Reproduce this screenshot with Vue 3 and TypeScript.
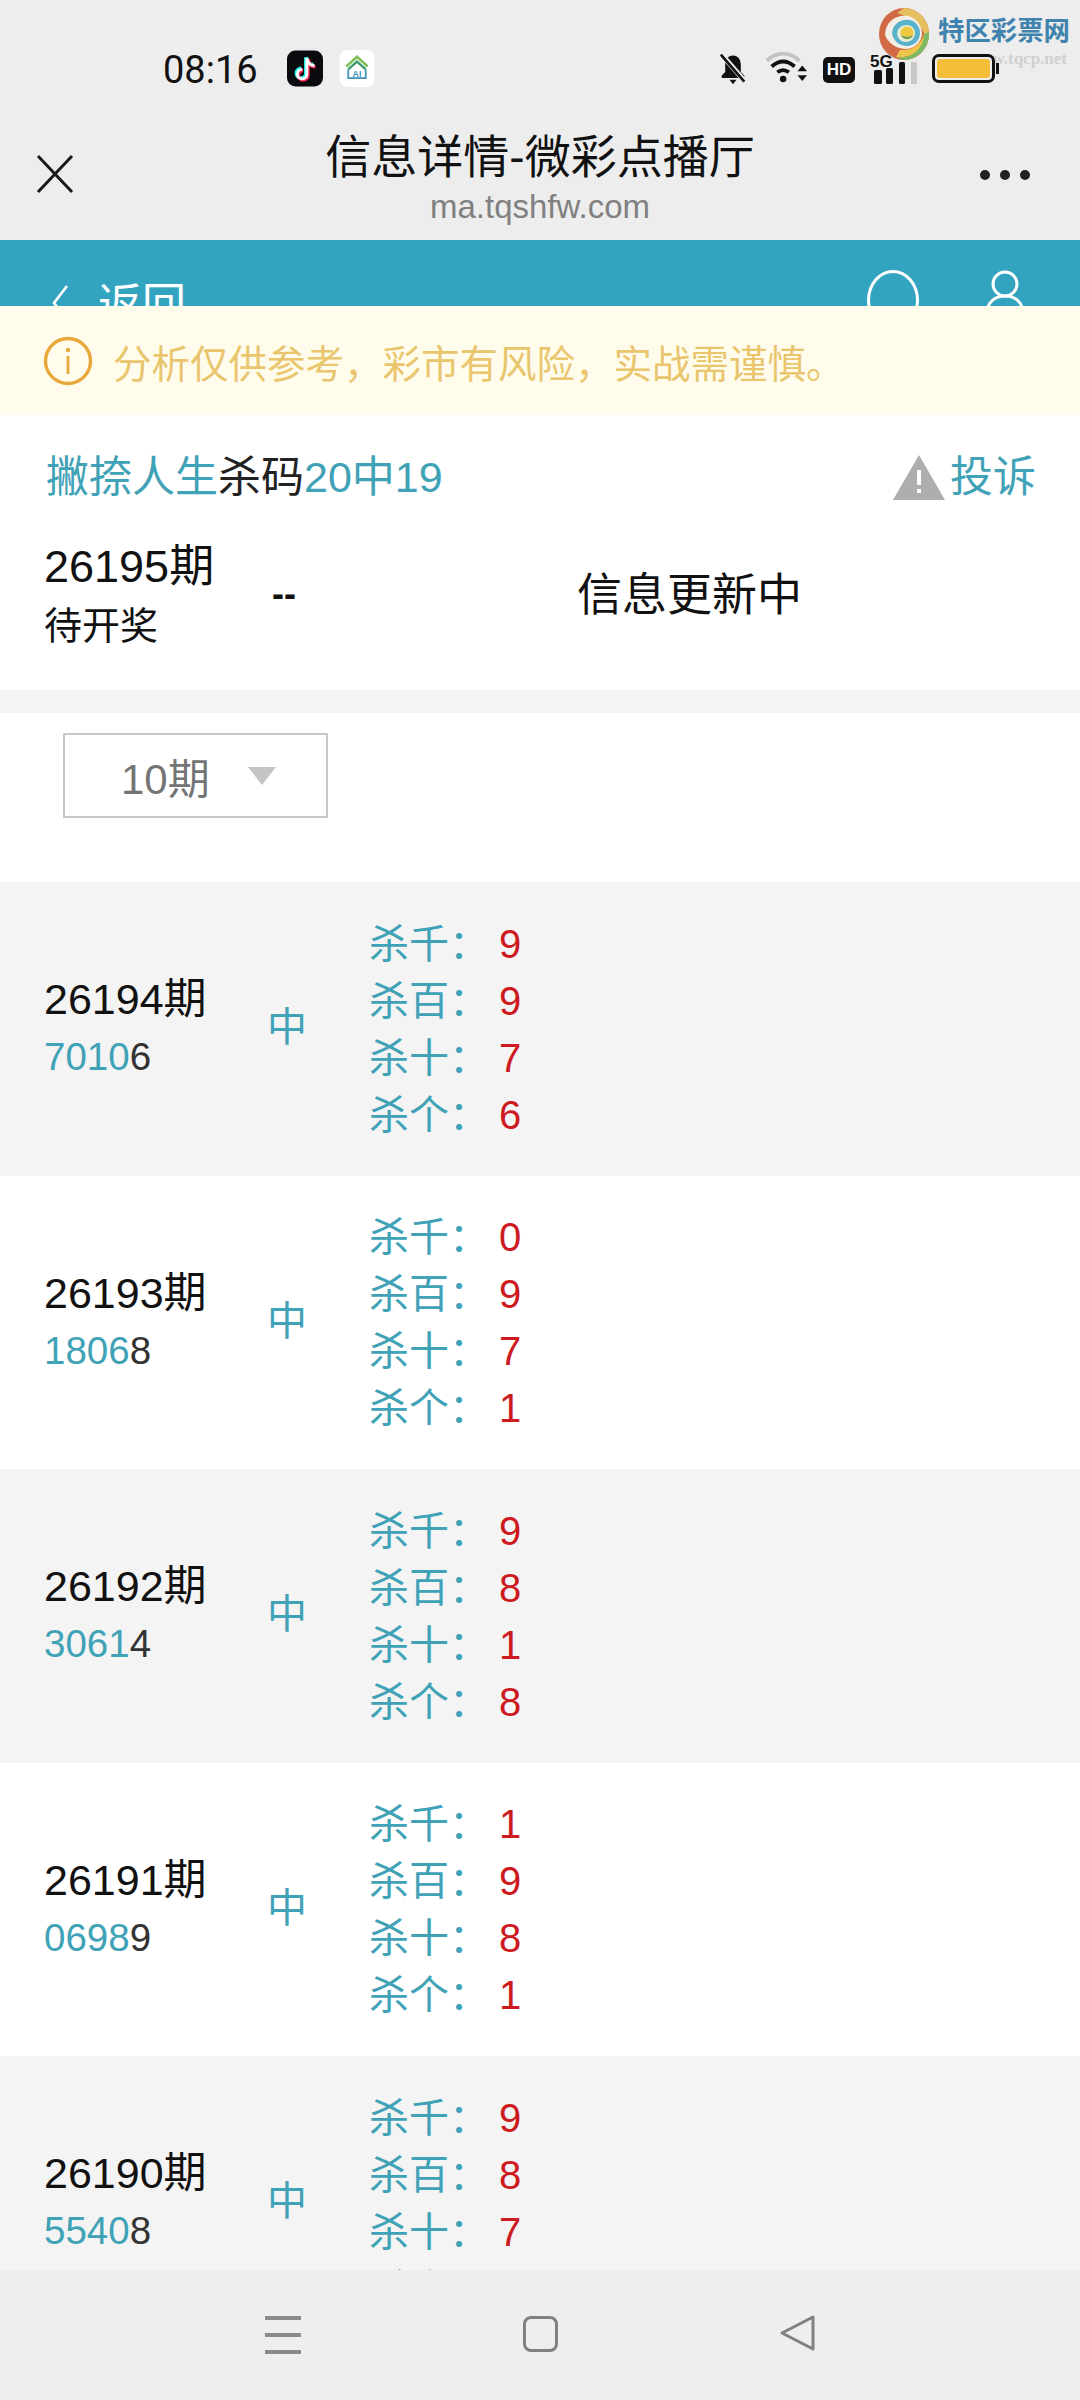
<script setup lang="ts">
interface Row { issue: string; hit: string; rest: string; kills: string[] }
const labels = ['杀千', '杀百', '杀十', '杀个']
const rows: Row[] = [
  { issue: '26194期', hit: '7010', rest: '6', kills: ['9', '9', '7', '6'] },
  { issue: '26193期', hit: '1806', rest: '8', kills: ['0', '9', '7', '1'] },
  { issue: '26192期', hit: '3061', rest: '4', kills: ['9', '8', '1', '8'] },
  { issue: '26191期', hit: '0698', rest: '9', kills: ['1', '9', '8', '1'] },
  { issue: '26190期', hit: '5540', rest: '8', kills: ['9', '8', '7', '9'] }
]
</script>

<template>
  <div class="phone">
    <div class="chrome">
      <div class="status">
        <span class="time">08:16</span>
        <svg class="app" width="36" height="37" viewBox="0 0 38 38">
          <rect width="38" height="38" rx="9" fill="#0b0b0f" />
          <path d="M21 8v17a5 5 0 1 1-5-5M21 8c1 5 4 8 8 8" fill="none" stroke="#25f4ee" stroke-width="4" transform="translate(-1 -1)" />
          <path d="M21 8v17a5 5 0 1 1-5-5M21 8c1 5 4 8 8 8" fill="none" stroke="#fe2c55" stroke-width="4" transform="translate(1 1)" />
          <path d="M21 8v17a5 5 0 1 1-5-5M21 8c1 5 4 8 8 8" fill="none" stroke="#fff" stroke-width="3" />
        </svg>
        <svg class="app" width="36" height="37" viewBox="0 0 36 38">
          <rect width="36" height="38" rx="8" fill="#fff" />
          <path d="M7 17 18 7l11 10" fill="none" stroke="#7fbf5a" stroke-width="2.6" />
          <path d="M9 20 18 12l9 8" fill="none" stroke="#3c9a70" stroke-width="2.4" />
          <path d="M9 20v9h18v-9" fill="none" stroke="#3f93b8" stroke-width="1.8" />
          <text x="18" y="28" class="ai">AI</text>
        </svg>
        <span class="status-right">
          <svg class="bell" width="32" height="33" viewBox="0 0 36 38">
            <path d="M18 4c-6 0-9 5-9 11v8l-4 4v3h26v-3l-4-4v-8c0-6-3-11-9-11z" fill="#111" />
            <path d="M14 32h8l-4 5z" fill="#111" />
            <path d="M5 3l26 30" stroke="#ededed" stroke-width="6" />
            <path d="M4 3l27 31" stroke="#111" stroke-width="3" />
          </svg>
          <svg class="wifi" width="44" height="31" viewBox="0 0 46 32">
            <path d="M3 9C13-1 27-1 37 9" fill="none" stroke="#c4c4c4" stroke-width="4" />
            <path d="M8 15c8-7 16-7 24 0" fill="none" stroke="#111" stroke-width="4" />
            <path d="M14 21c4-3 8-3 12 0" fill="none" stroke="#111" stroke-width="4" />
            <circle cx="20" cy="28" r="3.4" fill="#111" />
            <path d="M35 20l5-6 5 6zM35 24l5 6 5-6z" fill="#111" />
          </svg>
          <span class="hd">HD</span>
          <span class="signal">
            <span class="five">5G</span>
            <svg width="47" height="22" viewBox="0 0 47 22">
              <rect x="4" y="8" width="8" height="14" rx="1.5" fill="#111" />
              <rect x="16" y="6" width="7" height="16" rx="1.5" fill="#111" />
              <rect x="29" y="0" width="6" height="22" rx="1.5" fill="#111" />
              <rect x="41" y="0" width="6" height="22" fill="#c8c8c8" />
            </svg>
          </span>
          <span class="battery"><span class="charge"></span></span>
        </span>
      </div>
      <div class="titlebar">
        <svg class="close" width="40" height="40" viewBox="0 0 40 40">
          <path d="M3 2l34 36M37 2L3 38" stroke="#1a1a1a" stroke-width="3" fill="none" />
        </svg>
        <div class="title-block">
          <div class="title">信息详情-微彩点播厅</div>
          <div class="domain">ma.tqshfw.com</div>
        </div>
        <span class="more"><i></i><i></i><i></i></span>
      </div>
      <div class="brand">
        <svg width="50" height="52" viewBox="0 0 50 52">
          <ellipse cx="25" cy="26" rx="25" ry="26" fill="#d26a45" />
          <path d="M25 0a25 26 0 0 1 25 26c0 4-1 6-2 9-1-12-10-23-30-30z" fill="#e6bf5e" />
          <path d="M50 24c1 14-9 26-22 28-5 0-8-1-11-3 14 2 24-6 27-20 1-3 2-4 6-5z" fill="#7dba63" />
          <path d="M17 49c16 2 27-8 28-22-4 10-12 16-24 15z" fill="#eec44a" />
          <path d="M6 27C6 14 17 6 29 8c8 2 13 8 14 17 0 8-6 15-15 16C17 41 9 35 6 27z" fill="#f3efe6" />
          <path d="M13 26c0-10 9-15 17-14 7 1 11 7 11 13 0 7-6 13-13 13-8 0-13-5-15-12z" fill="#58b2cc" />
          <path d="M18 26c0-6 5-9 10-9 5 0 8 4 8 8 0 5-4 9-9 9-5 0-8-3-9-8z" fill="#e6ecd6" />
          <circle cx="28" cy="25" r="6.5" fill="#efc83f" />
          <path d="M22 27a6.500 6.500 0 0 0 12 0c-3 2-7 3-12 0z" fill="#5f9f6a" />
        </svg>
        <span class="brand-name">特区彩票网</span>
        <span class="brand-url">www.tqcp.net</span>
      </div>
    </div>

    <div class="viewport">
      <header class="tealbar">
        <span class="back"><svg width="20" height="38" viewBox="0 0 20 38"><path d="M17 3 4 20l13 17" fill="none" stroke="#fff" stroke-width="2.6" /></svg>返回</span>
        <span class="tools">
          <span class="ring"></span>
          <svg width="40" height="50" viewBox="0 0 40 50">
            <circle cx="20" cy="14" r="12" fill="none" stroke="#fff" stroke-width="3" />
            <path d="M2 44c0-12 8-18 18-18s18 6 18 18" fill="none" stroke="#fff" stroke-width="3" />
          </svg>
        </span>
      </header>

      <div class="notice">
        <svg width="50" height="50" viewBox="0 0 50 50">
          <circle cx="25" cy="25" r="22.500" fill="none" stroke="#e9a83a" stroke-width="3.400" />
          <circle cx="25" cy="14" r="2.200" fill="#e9a83a" />
          <rect x="23.600" y="20" width="2.800" height="18" fill="#e9a83a" />
        </svg>
        <span>分析仅供参考，彩市有风险，实战需谨慎。</span>
      </div>

      <section class="summary">
        <div class="headline">
          <div class="name"><span class="teal">撇捺人生</span>杀码<span class="teal">20中19</span></div>
          <div class="report">
            <svg width="54" height="46" viewBox="0 0 54 46">
              <path d="M27 1 53 46H1z" fill="#aeaeae" />
              <rect x="25" y="16" width="4" height="15" fill="#fff" />
              <rect x="25" y="35" width="4" height="4" fill="#fff" />
            </svg>
            <span class="teal">投诉</span>
          </div>
        </div>
        <div class="current">
          <div class="current-issue">
            <div class="issue-big">26195期</div>
            <div class="pending">待开奖</div>
          </div>
          <div class="dash">--</div>
          <div class="updating">信息更新中</div>
        </div>
      </section>

      <section class="filter">
        <div class="select"><span>10期</span><i class="caret"></i></div>
      </section>

      <div v-for="(row, r) in rows" :key="row.issue" class="row" :class="{ shaded: r % 2 === 0 }">
        <div class="issue">
          <div class="issue-no">{{ row.issue }}</div>
          <div class="code"><span class="teal">{{ row.hit }}</span>{{ row.rest }}</div>
        </div>
        <div class="hit">中</div>
        <div class="kills">
          <div v-for="(k, i) in row.kills" :key="i" class="kill">
            <span class="teal label">{{ labels[i] }}：</span><span class="red">{{ k }}</span>
          </div>
        </div>
      </div>
    </div>

    <nav class="navbar">
      <span class="menu"><i></i><i></i><i></i></span>
      <span class="home"></span>
      <svg width="38" height="38" viewBox="0 0 38 38">
        <path d="M35 3 4 19l31 16z" fill="none" stroke="#808080" stroke-width="3" stroke-linejoin="round" />
      </svg>
    </nav>
  </div>
</template>

<style>
html, body { margin: 0; padding: 0; background: #fff; }
</style>

<style scoped>
.phone {
  width: 1080px;
  height: 2400px;
  display: flex;
  flex-direction: column;
  overflow: hidden;
  font-family: "Liberation Sans", "Noto Sans CJK SC", sans-serif;
  color: #111;
  background: #fff;
}
.teal { color: #3fa2b6; }
.red { color: #cc1a20; }
.chrome {
  position: relative;
  height: 240px;
  flex: none;
  background: #ededed;
}
.status {
  position: relative;
  z-index: 2;
  height: 138px;
  box-sizing: border-box;
  padding: 50px 82px 0 163px;
  display: flex;
  align-items: flex-start;
}
.time { font-size: 38px; line-height: 40px; width: 124px; color: #111; font-family: "Roboto", sans-serif; }
.app { margin-right: 16px; }
.status-right { margin-left: auto; margin-top: 2px; display: flex; align-items: flex-end; gap: 15px; height: 33px; }
.status-right > * { display: block; flex: none; }
.wifi { margin-bottom: 2px; }
.ai { font-size: 9px; font-weight: 700; fill: #3f93b8; text-anchor: middle; font-family: "Liberation Sans", sans-serif; }
.hd {
  width: 32px;
  height: 26px;
  margin-bottom: 2px;
  background: #111;
  color: #fff;
  border-radius: 5px;
  font-size: 17px;
  line-height: 26px;
  font-weight: 700;
  text-align: center;
}
.signal { position: relative; width: 47px; height: 22px; margin-bottom: 1px; }
.signal svg { display: block; }
.five { position: absolute; left: 0; top: -9px; font-size: 17px; line-height: 18px; font-weight: 700; color: #111; text-shadow: 0 0 2px #fff; }
.battery {
  position: relative;
  width: 63px;
  height: 29px;
  margin-right: 3px;
  margin-bottom: 2px;
  box-sizing: border-box;
  border: 3px solid #111;
  border-radius: 7px;
  padding: 2px;
  background: #ededed;
}
.battery::after {
  content: "";
  position: absolute;
  right: -7px;
  top: 6px;
  width: 3px;
  height: 11px;
  background: #111;
}
.charge { display: block; width: 100%; height: 100%; background: #f4bd3a; border-radius: 3px; }
.titlebar {
  height: 102px;
  position: relative;
  display: flex;
  justify-content: center;
}
.close { position: absolute; left: 35px; top: 16px; }
.title-block { text-align: center; margin-top: -9px; }
.title { font-size: 46px; line-height: 56px; color: #111; }
.domain { font-size: 33px; line-height: 36px; color: #808080; margin-top: 4px; }
.more { position: absolute; right: 50px; top: 32px; display: flex; gap: 10px; }
.more i { width: 10px; height: 10px; border-radius: 50%; background: #222; }
.brand { position: absolute; left: 879px; top: 8px; width: 191px; display: flex; align-items: flex-start; }
.brand svg { flex: none; }
.brand-name {
  margin: 10px 0 0 9px;
  font-size: 26.400px;
  line-height: 27px;
  font-weight: 700;
  color: #3f83ae;
  white-space: nowrap;
}
.brand-url {
  position: absolute;
  right: 3px;
  top: 41px;
  font-size: 17px;
  line-height: 20px;
  color: #d0d0d0;
  font-family: "Liberation Serif", serif;
  font-weight: 700;
}
.viewport { flex: 1; min-height: 0; overflow: hidden; background: #f4f4f4; }
.tealbar {
  height: 66px;
  overflow: hidden;
  background: #33a4bf;
  color: #fff;
  display: flex;
  justify-content: space-between;
  padding: 37px 55px 0 50px;
  box-sizing: border-box;
}
.back { display: flex; align-items: flex-start; gap: 28px; font-size: 44px; line-height: 56px; height: 60px; }
.back svg { margin-top: 6px; }
.tools { display: flex; gap: 66px; align-items: flex-start; margin-top: -7px; }
.ring { box-sizing: border-box; width: 52px; height: 60px; border: 3px solid #fff; border-radius: 50%; }
.notice {
  height: 109px;
  background: #fffcec;
  display: flex;
  align-items: center;
  gap: 20px;
  padding-left: 43px;
  font-size: 38.500px;
  color: #e9c66e;
}
.summary { height: 275px; box-sizing: border-box; padding: 36px 44px 0; background: #fff; }
.headline { display: flex; justify-content: space-between; align-items: center; height: 52px; padding-left: 2px; }
.name { font-size: 43px; line-height: 52px; color: #222; }
.report { display: flex; align-items: center; gap: 4px; font-size: 43px; line-height: 52px; margin-right: 0; }
.current { display: flex; align-items: flex-start; margin-top: 38px; }
.current-issue { width: 228px; }
.issue-big { font-size: 45px; line-height: 52px; color: #111; }
.pending { font-size: 38px; line-height: 46px; margin-top: 10px; color: #111; }
.dash { width: 305px; font-size: 36px; line-height: 46px; margin-top: 30px; font-weight: 700; }
.updating { font-size: 45px; line-height: 56px; margin-top: 27px; color: #111; }
.filter { margin-top: 23px; height: 169px; box-sizing: border-box; padding: 20px 0 0 63px; background: #fff; }
.select {
  width: 265px;
  height: 85px;
  box-sizing: border-box;
  border: 2px solid #c8c8c8;
  display: flex;
  align-items: center;
  padding-left: 56px;
  font-size: 42px;
  color: #757575;
}
.caret {
  margin-left: 38px;
  width: 0;
  height: 0;
  border-left: 14px solid transparent;
  border-right: 14px solid transparent;
  border-top: 18px solid #c4c4c4;
}
.row {
  height: 293.500px;
  box-sizing: border-box;
  display: flex;
  align-items: center;
  padding: 2px 0 0 44px;
  background: #fff;
}
.row.shaded { background: #f4f4f4; }
.issue { width: 223px; padding-bottom: 5px; }
.issue-no { font-size: 43px; line-height: 50px; color: #111; }
.code { font-size: 38.500px; line-height: 46px; margin-top: 10px; color: #333; }
.hit { width: 102px; padding-bottom: 11px; font-size: 40px; color: #3fa2b6; }
.kills { font-size: 40px; }
.kill { height: 57px; line-height: 57px; display: flex; }
.label { width: 130px; }
.navbar {
  height: 130px;
  flex: none;
  background: #eeeeee;
  position: relative;
}
.menu { position: absolute; left: 265px; top: 46px; display: flex; flex-direction: column; gap: 13px; }
.menu i { width: 36px; height: 4px; background: #8a8a8a; display: block; }
.home { position: absolute; left: 523px; top: 46px; width: 29px; height: 30px; border: 3px solid #808080; border-radius: 8px; }
.navbar svg { position: absolute; left: 778px; top: 44px; }
</style>
